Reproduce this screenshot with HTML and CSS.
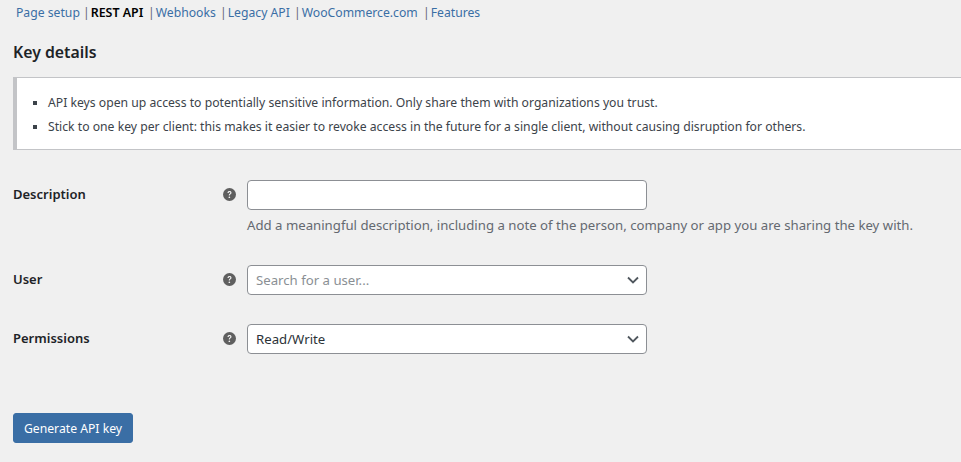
FILE: index.html
```html
<!DOCTYPE html>
<html lang="en">
<head>
    <meta charset="UTF-8">
    <meta name="viewport" content="width=device-width, initial-scale=1.0">
    <title>Key details</title>
    <link rel="stylesheet" href="styles.css">
</head>
<body>
    <div class="wrap">
        <!-- Sub navigation -->
        <ul class="subsubsub">
            <li class="sub-first"><a href="#">Page setup</a></li>
            <li class="sub-rest"><span class="sep">|</span><a href="#" class="current">REST API</a></li>
            <li class="sub-hooks"><span class="sep">|</span><a href="#">Webhooks</a></li>
            <li class="sub-legacy"><span class="sep">|</span><a href="#">Legacy API</a></li>
            <li class="sub-woo"><span class="sep">|</span><a href="#">WooCommerce.com</a></li>
            <li><span class="sep">|</span><a href="#">Features</a></li>
        </ul>

        <h2>Key details</h2>

        <div class="notice">
            <ul>
                <li>API keys open up access to potentially sensitive information. Only share them with organizations you trust.</li>
                <li>Stick to one key per client: this makes it easier to revoke access in the future for a single client, without causing disruption for others.</li>
            </ul>
        </div>

        <!-- Form -->
        <div class="form-row row-description">
            <div class="row-label">Description</div>
            <div class="row-help">
                <svg class="help-icon" viewBox="0 0 20 20"><circle cx="10" cy="10" r="10"/><path class="mark" d="M6.9 7.6c.1-2 1.4-3 3.2-3 1.800 0 3 1 3 2.600 0 1.200-.6 1.800-1.500 2.400-.8.500-1 .8-1 1.600v.4H8.900v-.6c0-1.200.5-1.800 1.300-2.300.7-.5 1-.8 1-1.400 0-.6-.4-1-1.100-1-.7 0-1.200.5-1.300 1.300z"/><circle class="mark" cx="9.800" cy="14.200" r="1.300"/></svg>
            </div>
            <div class="row-field">
                <input type="text" class="text-input">
                <p class="description">Add a meaningful description, including a note of the person, company or app you are sharing the key with.</p>
            </div>
        </div>

        <div class="form-row row-user">
            <div class="row-label">User</div>
            <div class="row-help">
                <svg class="help-icon" viewBox="0 0 20 20"><circle cx="10" cy="10" r="10"/><path class="mark" d="M6.9 7.6c.1-2 1.4-3 3.2-3 1.800 0 3 1 3 2.600 0 1.200-.6 1.800-1.500 2.400-.8.500-1 .8-1 1.600v.4H8.900v-.6c0-1.200.5-1.800 1.300-2.300.7-.5 1-.8 1-1.400 0-.6-.4-1-1.100-1-.7 0-1.200.5-1.300 1.300z"/><circle class="mark" cx="9.800" cy="14.200" r="1.300"/></svg>
            </div>
            <div class="row-field">
                <div class="select-box placeholder">
                    <span>Search for a user...</span>
                    <svg class="chevron" viewBox="0 0 12 8"><path d="M1 1.500l5 5 5-5"/></svg>
                </div>
            </div>
        </div>

        <div class="form-row row-permissions">
            <div class="row-label">Permissions</div>
            <div class="row-help">
                <svg class="help-icon" viewBox="0 0 20 20"><circle cx="10" cy="10" r="10"/><path class="mark" d="M6.9 7.6c.1-2 1.4-3 3.2-3 1.800 0 3 1 3 2.600 0 1.200-.6 1.800-1.500 2.400-.8.500-1 .8-1 1.600v.4H8.900v-.6c0-1.200.5-1.800 1.300-2.300.7-.5 1-.8 1-1.400 0-.6-.4-1-1.100-1-.7 0-1.200.5-1.300 1.300z"/><circle class="mark" cx="9.800" cy="14.200" r="1.300"/></svg>
            </div>
            <div class="row-field">
                <div class="select-box">
                    <span>Read/Write</span>
                    <svg class="chevron" viewBox="0 0 12 8"><path d="M1 1.500l5 5 5-5"/></svg>
                </div>
            </div>
        </div>

        <button class="button-primary">Generate API key</button>
    </div>
</body>
</html>
```

FILE: styles.css
```css
html, body {
    height: 462px;
    overflow: hidden;
}
body {
    margin: 0;
    background-color: #f0f0f0;
    color: #3c434a;
    font-family: "Noto Sans", "Open Sans", sans-serif;
    font-size: 13.2px;
}
.wrap {
    padding: 0 0 0 13px;
}
.subsubsub {
    display: flex;
    list-style: none;
    margin: 0;
    padding: 3px 0 0 3px;
    height: 23px;
    line-height: 20px;
    font-size: 12.2px;
    color: #646970;
}
.subsubsub li {
    white-space: nowrap;
}
.sub-first { width: 67px; }
.sub-rest { width: 65px; }
.sub-hooks { width: 72px; }
.sub-legacy { width: 74px; }
.sub-woo { width: 129px; }
.sep {
    margin-right: 1px;
}
.subsubsub a {
    color: #3a6ea5;
    text-decoration: none;
}
.subsubsub a.current {
    color: #000;
    font-size: 12.4px;
    font-weight: 600;
}
h2 {
    margin: 16px 0 15px;
    color: #1d2327;
    font-size: 15.8px;
    font-weight: 600;
    line-height: 20px;
}
.notice {
    box-sizing: border-box;
    margin-right: -40px;
    height: 73px;
    background: #fff;
    border: 1px solid #c3c4c7;
    border-left-width: 4px;
    border-right: 0;
}
.notice ul {
    list-style: square;
    margin: 0;
    padding: 13px 0 0 31px;
    font-size: 12.2px;
}
.notice li {
    line-height: 24px;
}
.notice li::marker {
    color: #3c434a;
}
.form-row {
    display: flex;
}
.row-description { margin-top: 30px; height: 85px; }
.row-user { height: 59px; }
.row-permissions { height: 89px; }
.row-label {
    width: 210px;
    padding-top: 4px;
    line-height: 20px;
    color: #1d2327;
    font-size: 13px;
    font-weight: 600;
}
.row-help {
    width: 24px;
    padding-top: 8px;
}
.help-icon {
    display: block;
    width: 13px;
    height: 13px;
    fill: #5f5f5f;
}
.help-icon .mark {
    fill: #f0f0f0;
}
.row-field {
    width: 700px;
}
.text-input, .select-box {
    box-sizing: border-box;
    display: flex;
    align-items: center;
    justify-content: space-between;
    width: 400px;
    height: 30px;
    margin: 0;
    padding: 0 8px;
    background: #fff;
    border: 1px solid #8c8f94;
    border-radius: 4px;
    color: #2c3338;
    font: inherit;
}
.placeholder {
    color: #8a8f94;
}
.chevron {
    width: 12px;
    height: 8px;
    margin-right: -1px;
    fill: none;
    stroke: #50575e;
    stroke-width: 1.8;
}
.description {
    margin: 5px 0 0;
    line-height: 20px;
    color: #646970;
    white-space: nowrap;
}
.button-primary {
    display: block;
    width: 120px;
    height: 30px;
    padding: 0;
    background: #3a6ea5;
    border: 1px solid #3a6ea5;
    border-radius: 3px;
    color: #fff;
    font: inherit;
    font-size: 12.2px;
    cursor: pointer;
}
```
